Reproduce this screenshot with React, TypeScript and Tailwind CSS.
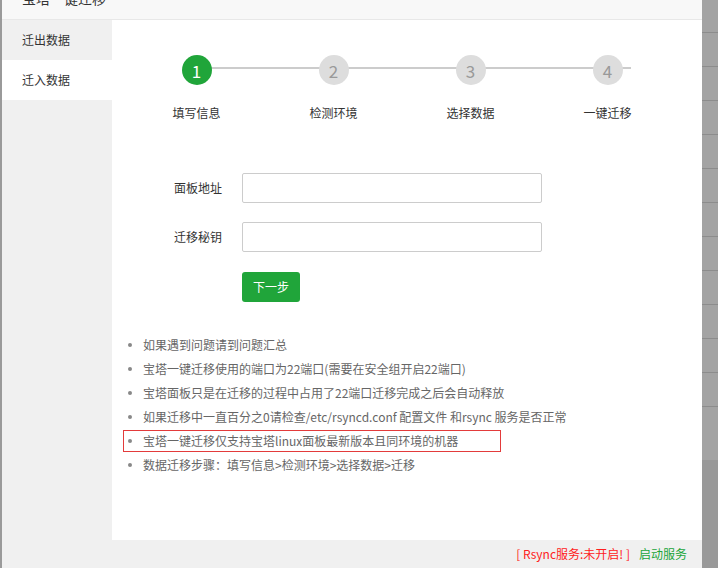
import React from "react";

const font = { fontFamily: '"Noto Sans CJK SC", "Noto Sans", sans-serif' };

function RightStrip() {
  const rows = Array.from({ length: 11 });
  return (
    <div className="flex-1 flex flex-col bg-[#a3a3a3]">
      <div className="h-[32px]" />
      {rows.map((_, i) => (
        <div key={i} className="h-[34px] border-t border-[#8c8c8c]" />
      ))}
      <div className="h-[54px] border-t border-[#8c8c8c]" />
      <div className="flex-1 bg-[#999999]" />
    </div>
  );
}

const steps = ["填写信息", "检测环境", "选择数据", "一键迁移"];

const tips = [
  "如果遇到问题请到问题汇总",
  "宝塔一键迁移使用的端口为22端口(需要在安全组开启22端口)",
  "宝塔面板只是在迁移的过程中占用了22端口迁移完成之后会自动释放",
  "如果迁移中一直百分之0请检查/etc/rsyncd.conf 配置文件 和rsync 服务是否正常",
  "宝塔一键迁移仅支持宝塔linux面板最新版本且同环境的机器",
  "数据迁移步骤：填写信息>检测环境>选择数据>迁移",
];

export default function App() {
  return (
    <div className="w-[718px] h-[568px] flex overflow-hidden bg-[#999]" style={font}>
      <div className="w-[2px] bg-[#9a9a9a]" />
      <div className="w-[700px] h-full flex flex-col bg-white">
        {/* title bar */}
        <div className="h-[20px] bg-[#f8f8f8] border-b border-[#e8e8e8] overflow-hidden pl-[20px] shrink-0">
          <div className="mt-[-23px] leading-[42px] text-[14px] text-[#333]">宝塔一键迁移</div>
        </div>
        {/* body */}
        <div className="flex h-[520px] shrink-0">
          <div className="w-[110px] bg-[#f0f0f0] flex flex-col">
            <div className="h-[40px] flex items-center pl-[20px] text-[12px] text-[#333]">迁出数据</div>
            <div className="h-[40px] flex items-center pl-[20px] text-[12px] text-[#333] bg-white">迁入数据</div>
          </div>
          <div className="flex-1 bg-white flex flex-col">
            {/* stepper */}
            <div className="relative mt-[35px] pl-[16px] flex">
              <div className="absolute left-[84px] top-[12px] w-[435px] h-[2px] bg-[#cccccc]" />
              {steps.map((s, i) => (
                <div key={s} className="relative w-[137px] flex flex-col items-center">
                  <div
                    className={
                      i === 0
                        ? "w-[30px] h-[30px] rounded-full bg-[#20a53a] text-white flex items-center justify-center text-[17px] leading-none"
                        : "w-[30px] h-[30px] rounded-full bg-[#dddddd] text-[#999] flex items-center justify-center text-[17px] leading-none"
                    }
                  >
                    {i + 1}
                  </div>
                  <div className="mt-[20px] text-[12px] leading-[16px] text-[#333]">{s}</div>
                </div>
              ))}
            </div>
            {/* form */}
            <div className="mt-[52px] flex flex-col">
              <div className="flex items-center h-[30px]">
                <div className="w-[110px] text-right text-[12px] text-[#333]">面板地址</div>
                <div className="ml-[20px] w-[300px] h-[30px] border border-[#cccccc] rounded-[2px] bg-white" />
              </div>
              <div className="flex items-center h-[30px] mt-[19px]">
                <div className="w-[110px] text-right text-[12px] text-[#333]">迁移秘钥</div>
                <div className="ml-[20px] w-[300px] h-[30px] border border-[#cccccc] rounded-[2px] bg-white" />
              </div>
              <div className="flex mt-[20px]">
                <div className="ml-[130px] w-[58px] h-[30px] rounded-[3px] bg-[#20a53a] text-white text-[12px] flex items-center justify-center">
                  下一步
                </div>
              </div>
            </div>
            {/* tips */}
            <div className="mt-[31px] flex flex-col">
              {tips.map((t, i) => (
                <div key={i} className="h-[24px] flex items-center">
                  <div
                    className={
                      i === 4
                        ? "ml-[11px] w-[378px] h-[22px] border border-[#e33b3b] flex items-center pl-[4px]"
                        : "ml-[11px] h-[22px] flex items-center pl-[5px]"
                    }
                  >
                    <span className="w-[4px] h-[4px] rounded-full bg-[#888] shrink-0" />
                    <span className="ml-[11px] text-[12px] text-[#666] whitespace-nowrap">{t}</span>
                  </div>
                </div>
              ))}
            </div>
          </div>
        </div>
        {/* footer */}
        <div className="flex-1 bg-[#f0f0f0] flex items-center justify-end pr-[15px] text-[12px]">
          <span className="text-[#ff2020]">[ Rsync服务:未开启! ]</span>
          <span className="ml-[9px] text-[#20a53a]">启动服务</span>
        </div>
      </div>
      <RightStrip />
    </div>
  );
}
